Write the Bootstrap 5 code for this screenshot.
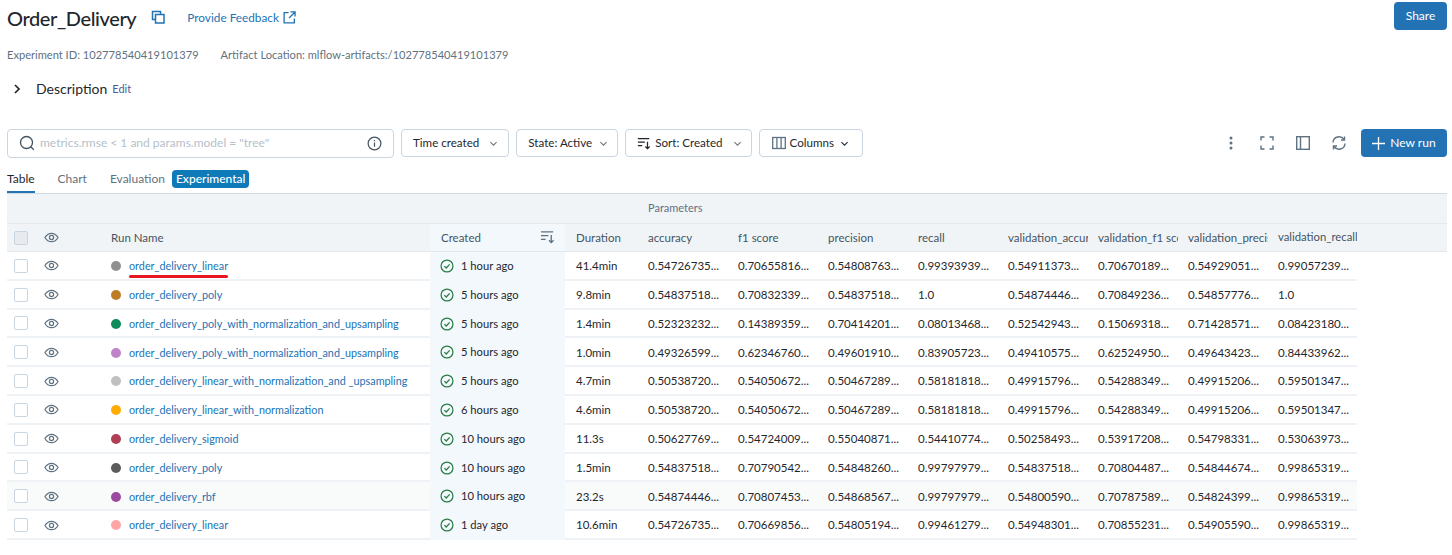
<!DOCTYPE html>
<html>
  <head>
    <title>Order_Delivery</title>
    <link href="https://cdn.jsdelivr.net/npm/bootstrap@5.3.3/dist/css/bootstrap.min.css" rel="stylesheet" />
    <style>
      body { font-family: "Lato", "Noto Sans", sans-serif; font-size: 12px; color: #1f272d; background: #fff; overflow: hidden; }
      .page-wrap { padding: 2px 5px 0 7px; }
      .title-row { height: 28px; }
      .exp-title { font-size: 20px; letter-spacing: -0.4px; font-weight: 500; margin: 3px 0 0; line-height: 28px; }
      .blue-link { color: #2272b4; text-decoration: none; }
      .copy-icon { margin-left: 15px; margin-top: 1px; }
      .feedback { margin-left: 22px; font-size: 11.8px; margin-top: 3px; }
      .share-btn, .new-btn { background: #2272b4; color: #fff; border: 0; border-radius: 4px; font-size: 12px; }
      .share-btn { width: 53px; height: 28px; }
      .meta-row { margin-top: 16px; height: 18px; line-height: 18px; color: #5f7281; gap: 22px; font-size: 11.1px; }
      .desc-row { margin-top: 16px; height: 18px; line-height: 18px; font-size: 14px; }
      .desc-row .chev { margin: 0 14px 0 5px; }
      .desc-edit { font-size: 11px; margin-left: 5px; color: #4a5a9c; }
      .tool-row { margin-top: 30px; height: 30px; font-size: 11.6px; }
      .search-box { width: 387px; height: 29px; border: 1px solid #c9d5e0; border-radius: 4px; padding: 0 11px; color: #b5bfc8; margin-right: 7px; }
      .search-box .hint { flex: 1; margin-left: 5px; font-size: 12px; }
      .tool-btn { height: 28px; border: 1px solid #c9d5e0; border-radius: 4px; background: #fff; padding: 0 9px 0 11px; margin-right: 7px; gap: 9px; color: #1f272d; }
      .tool-btn.state-btn { gap: 6px; padding-right: 8px; }
      .tool-btn.sort-btn { padding-right: 8px; }
      .tool-btn.cols-btn { padding: 0 12px; }
      .lead-icon { margin-right: -5px; }
      .tight-chev { margin-left: -4px; }
      .ghost-icon { width: 16px; height: 16px; margin-right: 20px; color: #5f7281; }
      .ghost-icon.last-icon { margin-right: 14px; }
      .new-btn { width: 86px; height: 28px; gap: 5px; }
      .tab-row { height: 36px; gap: 23px; border-bottom: 1px solid #d1d9e1; align-items: flex-end; }
      .tab-item { height: 26px; line-height: 24px; color: #5f7281; font-size: 12px; }
      .tab-item.on { color: #1f272d; border-bottom: 2px solid #2272b4; }
      .exp-pill { background: #0e7ab8; color: #fff; border-radius: 4px; height: 18px; line-height: 18px; padding: 0 4px; margin: 0 0 5px -16px; font-weight: 500; }
      .runs-table { table-layout: fixed; width: 1440px; margin: 0; border-collapse: collapse; font-size: 11.5px; }
      .runs-table td, .runs-table th { padding: 1px 10px 0; height: 28.8px; vertical-align: middle; white-space: nowrap; overflow: hidden; font-weight: 400; border: 0; border-bottom: 2px solid #eef2f6; background: transparent; color: #1f272d; box-shadow: none; }
      .runs-table th { background: #f1f4f7; height: 29px; color: #445562; border-bottom: 1px solid #e3e8ed; }
      .runs-table tr.col-heads th { height: 28px; }
      .runs-table th.group-head { color: #5f7281; font-size: 11px; padding-top: 0; }
      .runs-table th.created-col { background: #f3f8fc; padding-left: 11px; }
      .runs-table td.created-col { background: #f3f8fc; border-bottom-color: #f3f8fc; font-size: 11.2px; padding-top: 2px; }
      .runs-table td.filler { border-bottom: 0; }
      .runs-table th.last-param { padding-right: 0; font-size: 11.3px; }
      .runs-table .dur-col { padding-left: 11px; }
      .runs-table tr.hovered td:not(.created-col):not(.filler) { background: #f9fbfb; }
      .runs-table td.name-cell, .runs-table th.name-cell { padding-left: 15px; position: relative; overflow: visible; }
      .run-name { font-size: 10.8px; }
      .check-box { display: block; width: 14px; height: 14px; border: 1px solid #c9d5e0; border-radius: 2px; background: #fff; margin-left: -3px; }
      th .check-box { background: #e7ebef; }
      .eye { display: block; width: 15px; height: 15px; color: #5f7281; margin-left: -4px; }
      .run-dot { display: inline-block; width: 10px; height: 10px; border-radius: 50%; margin-right: 8px; vertical-align: -1px; }
      .red-mark { position: absolute; left: 33px; bottom: 1px; width: 99px; height: 3px; background: #e8161f; border-radius: 2px; }
      .ok-icon { width: 14px; height: 14px; color: #277c43; margin-right: 7px; vertical-align: -3px; }
      .sort-icon { float: right; width: 15px; height: 15px; color: #5f7281; margin-right: 0; }
    </style>
  </head>
  <body>
    <svg width="0" height="0" class="position-absolute">
      <symbol id="ic-eye" viewBox="0 0 16 16"><path d="M1 8c1.800-3 4.200-4.500 7-4.500S13.200 5 15 8c-1.800 3-4.200 4.500-7 4.500S2.800 11 1 8z" fill="none" stroke="currentColor" stroke-width="1.300"/><circle cx="8" cy="8" r="2.200" fill="none" stroke="currentColor" stroke-width="1.300"/></symbol>
      <symbol id="ic-ok" viewBox="0 0 16 16"><circle cx="8" cy="8" r="6.800" fill="none" stroke="currentColor" stroke-width="1.400"/><path d="M5 8.200l2.100 2.100L11 6.200" fill="none" stroke="currentColor" stroke-width="1.400"/></symbol>
      <symbol id="ic-sort" viewBox="0 0 16 16"><path d="M1 3h13M1 7h8M1 11h5" stroke="currentColor" stroke-width="1.400" fill="none"/><path d="M12 6.500v8M9.500 12l2.500 2.500 2.500-2.500" stroke="currentColor" stroke-width="1.400" fill="none"/></symbol>
      <symbol id="ic-chev" viewBox="0 0 16 16"><path d="M3.500 6l4.500 4.500L12.500 6" stroke="currentColor" stroke-width="1.500" fill="none"/></symbol>
    </svg>

    <div class="page-wrap">
      <div class="title-row d-flex align-items-center">
        <h1 class="exp-title">Order_Delivery</h1>
        <svg class="copy-icon blue-link" width="14" height="14" viewBox="0 0 14 14" fill="none" stroke="currentColor" stroke-width="1.500"><path d="M9.500 4V1.500h-8v8H4"/><rect x="4.500" y="4.500" width="8.500" height="8.500" fill="none"/></svg>
        <a class="feedback blue-link d-flex align-items-center gap-1" href="#">Provide Feedback
          <svg width="13" height="13" viewBox="0 0 14 14" fill="none" stroke="currentColor" stroke-width="1.400"><path d="M6 1.700H1.200v11h11V8M8 .9h5v5M13 1L6.500 7.500"/></svg>
        </a>
        <button class="share-btn ms-auto" type="button">Share</button>
      </div>

      <div class="meta-row d-flex">
        <span>Experiment ID: 102778540419101379</span>
        <span>Artifact Location: mlflow-artifacts:/102778540419101379</span>
      </div>

      <div class="desc-row d-flex align-items-center">
        <svg class="chev" width="10" height="10" viewBox="0 0 10 10" fill="none" stroke="#1f272d" stroke-width="1.700"><path d="M3 1l4 4-4 4"/></svg>
        <span>Description</span><a class="desc-edit text-decoration-none" href="#">Edit</a>
      </div>

      <div class="tool-row d-flex align-items-center">
        <div class="search-box d-flex align-items-center">
          <svg width="16" height="16" viewBox="0 0 16 16" fill="none" stroke="#445562" stroke-width="1.300"><circle cx="7.500" cy="7.500" r="6"/><path d="M11.800 11.800l3 3"/></svg>
          <span class="hint">metrics.rmse &lt; 1 and params.model = "tree"</span>
          <svg width="15" height="15" viewBox="0 0 16 16" fill="none" stroke="#445562" stroke-width="1.300"><circle cx="8" cy="8" r="6.800"/><path d="M8 7v4.500M8 4.200v1.500"/></svg>
        </div>
        <button class="tool-btn d-flex align-items-center" type="button">Time created <svg width="11" height="11" class="text-secondary"><use href="#ic-chev"/></svg></button>
        <button class="tool-btn state-btn d-flex align-items-center" type="button">State: Active <svg width="11" height="11" class="text-secondary"><use href="#ic-chev"/></svg></button>
        <button class="tool-btn sort-btn d-flex align-items-center" type="button"><svg class="lead-icon" width="14" height="14"><use href="#ic-sort"/></svg> Sort: Created <svg width="11" height="11" class="text-secondary"><use href="#ic-chev"/></svg></button>
        <button class="tool-btn cols-btn d-flex align-items-center" type="button"><svg class="lead-icon" width="14" height="14" viewBox="0 0 14 14" fill="none" stroke="#5f7281" stroke-width="1.300"><rect x=".7" y="1.500" width="12.600" height="11"/><path d="M4.900 1.500v11M9.100 1.500v11"/></svg> Columns <svg class="tight-chev" width="11" height="11"><use href="#ic-chev"/></svg></button>
        <svg class="ghost-icon ms-auto blue-link" viewBox="0 0 16 16" fill="currentColor"><circle cx="8" cy="3" r="1.500"/><circle cx="8" cy="8" r="1.500"/><circle cx="8" cy="13" r="1.500"/></svg>
        <svg class="ghost-icon" viewBox="0 0 16 16" fill="none" stroke="currentColor" stroke-width="1.400"><path d="M2 5.500V2h3.500M10.500 2H14v3.500M14 10.500V14h-3.500M5.500 14H2v-3.500"/></svg>
        <svg class="ghost-icon" viewBox="0 0 16 16" fill="none" stroke="currentColor" stroke-width="1.400"><rect x="1.700" y="1.700" width="12.600" height="12.600"/><path d="M5.500 1.700v12.600"/></svg>
        <svg class="ghost-icon last-icon" viewBox="0 0 16 16" fill="none" stroke="currentColor" stroke-width="1.400"><path d="M2 7.500A6 6 0 0 1 13 4.500M14 8.500A6 6 0 0 1 3 11.500"/><path d="M13.500 1.500v3.500H10M2.500 14.500V11H6"/></svg>
        <button class="new-btn d-flex align-items-center justify-content-center" type="button"><svg width="13" height="13" viewBox="0 0 13 13" stroke="#fff" stroke-width="1.300"><path d="M6.500 0v13M0 6.500h13"/></svg> New run</button>
      </div>

      <div class="tab-row d-flex">
        <span class="tab-item on">Table</span>
        <span class="tab-item">Chart</span>
        <span class="tab-item">Evaluation</span>
        <span class="exp-pill">Experimental</span>
      </div>

      <table class="table runs-table">
        <colgroup>
          <col style="width: 31px" /><col style="width: 58px" /><col style="width: 334px" /><col style="width: 135px" /><col style="width: 73px" />
          <col style="width: 90px" /><col style="width: 90px" /><col style="width: 90px" /><col style="width: 90px" /><col style="width: 90px" /><col style="width: 90px" /><col style="width: 90px" /><col style="width: 89px" /><col />
        </colgroup>
        <thead>
          <tr>
            <th colspan="5"></th>
            <th class="group-head" colspan="8">Parameters</th>
            <th></th>
          </tr>
          <tr class="col-heads">
            <th><span class="check-box"></span></th>
            <th><svg class="eye"><use href="#ic-eye"/></svg></th>
            <th class="name-cell">Run Name</th>
            <th class="created-col">Created <svg class="sort-icon"><use href="#ic-sort"/></svg></th>
            <th class="dur-col">Duration</th>
            <th>accuracy</th><th>f1 score</th><th>precision</th><th>recall</th>
            <th>validation_accur</th><th>validation_f1 scc</th><th>validation_precis</th><th class="last-param">validation_recall</th>
            <th></th>
          </tr>
        </thead>
        <tbody id="runRows"></tbody>
      </table>
    </div>

    <script src="https://cdn.jsdelivr.net/npm/bootstrap@5.3.3/dist/js/bootstrap.bundle.min.js"></script>
    <script>
      const runs = [
        ["order_delivery_linear", "#909090", "1 hour ago", "41.4min", "0.54726735", "0.70655816", "0.54808763", "0.99393939", "0.54911373", "0.70670189", "0.54929051", "0.99057239"],
        ["order_delivery_poly", "#bd7d24", "5 hours ago", "9.8min", "0.54837518", "0.70832339", "0.54837518", "1.0", "0.54874446", "0.70849236", "0.54857776", "1.0"],
        ["order_delivery_poly_with_normalization_and_upsampling", "#0e8a5b", "5 hours ago", "1.4min", "0.52323232", "0.14389359", "0.70414201", "0.08013468", "0.52542943", "0.15069318", "0.71428571", "0.08423180"],
        ["order_delivery_poly_with_normalization_and_upsampling", "#c083c9", "5 hours ago", "1.0min", "0.49326599", "0.62346760", "0.49601910", "0.83905723", "0.49410575", "0.62524950", "0.49643423", "0.84433962"],
        ["order_delivery_linear_with_normalization_and _upsampling", "#c0c0c0", "5 hours ago", "4.7min", "0.50538720", "0.54050672", "0.50467289", "0.58181818", "0.49915796", "0.54288349", "0.49915206", "0.59501347"],
        ["order_delivery_linear_with_normalization", "#ffab00", "6 hours ago", "4.6min", "0.50538720", "0.54050672", "0.50467289", "0.58181818", "0.49915796", "0.54288349", "0.49915206", "0.59501347"],
        ["order_delivery_sigmoid", "#b03f55", "10 hours ago", "11.3s", "0.50627769", "0.54724009", "0.55040871", "0.54410774", "0.50258493", "0.53917208", "0.54798331", "0.53063973"],
        ["order_delivery_poly", "#5c5c5c", "10 hours ago", "1.5min", "0.54837518", "0.70790542", "0.54848260", "0.99797979", "0.54837518", "0.70804487", "0.54844674", "0.99865319"],
        ["order_delivery_rbf", "#9a4b9f", "10 hours ago", "23.2s", "0.54874446", "0.70807453", "0.54868567", "0.99797979", "0.54800590", "0.70787589", "0.54824399", "0.99865319"],
        ["order_delivery_linear", "#ffa5a5", "1 day ago", "10.6min", "0.54726735", "0.70669856", "0.54805194", "0.99461279", "0.54948301", "0.70855231", "0.54905590", "0.99865319"],
      ];

      const cut = (v) => (v.length > 3 ? v + "..." : v);

      document.getElementById("runRows").innerHTML = runs
        .map((r, i) => {
          const nums = r.slice(4).map((v) => `<td>${cut(v)}</td>`).join("");
          return `<tr class="${i === 8 ? "hovered" : ""}">
            <td><span class="check-box"></span></td>
            <td><svg class="eye"><use href="#ic-eye"/></svg></td>
            <td class="name-cell"><span class="run-dot" style="background:${r[1]}"></span><a class="blue-link run-name" href="#">${r[0]}</a>${i === 0 ? '<span class="red-mark"></span>' : ""}</td>
            <td class="created-col"><svg class="ok-icon"><use href="#ic-ok"/></svg>${r[2]}</td>
            <td class="dur-col">${r[3]}</td>${nums}<td class="filler"></td></tr>`;
        })
        .join("");
    </script>
  </body>
</html>
